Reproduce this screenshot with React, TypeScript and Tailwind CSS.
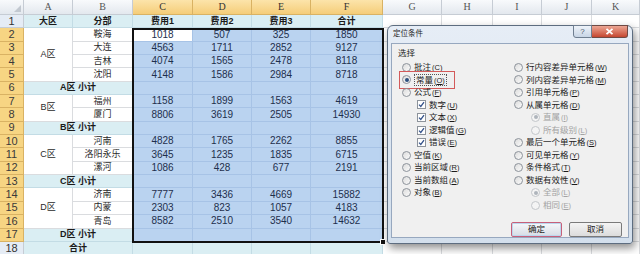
import React from "react";

const base =
  "flex items-center justify-center whitespace-nowrap overflow-hidden border-r border-b leading-none";
const white = "bg-white border-[#dadcdf] text-[#2a2a2a] text-[9px]";
const teal = "bg-[#daeef3] border-[#c3dce5] text-[#1a1a1a] font-bold text-[9px]";
const sel = "bg-[#bad3f0] border-[#a7c3e6] text-[#1e2f4d] text-[10px]";
const selSub = "bg-[#a6c7ec] border-[#95b8e2]";
const active = "bg-white border-[#a7c3e6] text-[#1e2f4d] text-[10px]";
const rowHeadSel = "bg-[#f7d583] border-[#d9b263] text-[#3a3a3a] text-[11px]";
const rowHead = "bg-[#e5ecf5] border-[#c6ccd4] text-[#333] text-[11px]";
const colHead =
  "bg-linear-to-b from-[#f8fafc] to-[#e3e8ee] border-[#c6ccd4] text-[#555] text-[10px] font-['Liberation_Serif',serif]";
const colHeadSel =
  "bg-linear-to-b from-[#fce4aa] to-[#f5cd78] border-[#d9b263] text-[#333] text-[10px] font-['Liberation_Serif',serif]";

const spanRows: Record<number, string> = {
  2: "row-span-2",
  3: "row-span-3",
  4: "row-span-4",
};

const groups: { name: string; rows: [string, number, number, number, number][] }[] = [
  {
    name: "A区",
    rows: [
      ["鞍海", 1018, 507, 325, 1850],
      ["大连", 4563, 1711, 2852, 9127],
      ["吉林", 4074, 1565, 2478, 8118],
      ["沈阳", 4148, 1586, 2984, 8718],
    ],
  },
  {
    name: "B区",
    rows: [
      ["福州", 1158, 1899, 1563, 4619],
      ["厦门", 8806, 3619, 2505, 14930],
    ],
  },
  {
    name: "C区",
    rows: [
      ["河南", 4828, 1765, 2262, 8855],
      ["洛阳永乐", 3645, 1235, 1835, 6715],
      ["漯河", 1086, 428, 677, 2191],
    ],
  },
  {
    name: "D区",
    rows: [
      ["济南", 7777, 3436, 4669, 15882],
      ["内蒙", 2303, 823, 1057, 4183],
      ["青岛", 8582, 2510, 3540, 14632],
    ],
  },
];

function Cell({ cls, children }: { cls: string; children?: React.ReactNode }) {
  return <div className={`${base} ${cls}`}>{children}</div>;
}

function Radio({ checked, disabled }: { checked?: boolean; disabled?: boolean }) {
  return (
    <span
      className={
        disabled
          ? "w-[9px] h-[9px] shrink-0 rounded-full border border-[#c3c6ca] bg-[#f4f4f4] flex items-center justify-center"
          : "w-[9px] h-[9px] shrink-0 rounded-full border border-[#8d939b] bg-linear-to-br from-[#dcdcdc] to-[#fbfbfb] flex items-center justify-center"
      }
    >
      {checked ? (
        <span
          className={
            disabled
              ? "w-[4px] h-[4px] rounded-full bg-[#aeb4bb]"
              : "w-[4px] h-[4px] rounded-full bg-[#2b4f7e]"
          }
        />
      ) : null}
    </span>
  );
}

function Check() {
  return (
    <span className="w-[9px] h-[9px] shrink-0 border border-[#8d939b] bg-white flex items-center justify-center">
      <svg width="7" height="7" viewBox="0 0 7 7">
        <path d="M1 3.6 L2.8 5.4 L6 1.2" fill="none" stroke="#34528a" strokeWidth="1.3" />
      </svg>
    </span>
  );
}

function Label({ text, k, disabled }: { text: string; k: string; disabled?: boolean }) {
  return (
    <span
      className={
        disabled
          ? "text-[8.5px] leading-none text-[#a3a3a3] whitespace-nowrap"
          : "text-[8.5px] leading-none text-[#1b1b1b] whitespace-nowrap"
      }
    >
      {text}
      <span className="text-[7.5px] ml-[1px]">
        (<u>{k}</u>)
      </span>
    </span>
  );
}

type Opt = { t: string; k: string; kind: "r" | "c" | "sr"; checked?: boolean; disabled?: boolean; mark?: boolean } | null;

const leftOpts: Opt[] = [
  { t: "批注", k: "C", kind: "r" },
  { t: "常量", k: "O", kind: "r", checked: true, mark: true },
  { t: "公式", k: "F", kind: "r" },
  { t: "数字", k: "U", kind: "c" },
  { t: "文本", k: "X", kind: "c" },
  { t: "逻辑值", k: "G", kind: "c" },
  { t: "错误", k: "E", kind: "c" },
  { t: "空值", k: "K", kind: "r" },
  { t: "当前区域", k: "R", kind: "r" },
  { t: "当前数组", k: "A", kind: "r" },
  { t: "对象", k: "B", kind: "r" },
  null,
];

const rightOpts: Opt[] = [
  { t: "行内容差异单元格", k: "W", kind: "r" },
  { t: "列内容差异单元格", k: "M", kind: "r" },
  { t: "引用单元格", k: "P", kind: "r" },
  { t: "从属单元格", k: "D", kind: "r" },
  { t: "直属", k: "I", kind: "sr", checked: true, disabled: true },
  { t: "所有级别", k: "L", kind: "sr", disabled: true },
  { t: "最后一个单元格", k: "S", kind: "r" },
  { t: "可见单元格", k: "Y", kind: "r" },
  { t: "条件格式", k: "T", kind: "r" },
  { t: "数据有效性", k: "V", kind: "r" },
  { t: "全部", k: "L", kind: "sr", checked: true, disabled: true },
  { t: "相同", k: "E", kind: "sr", disabled: true },
];

function OptRow({ o }: { o: Opt }) {
  if (!o) return <div className="h-[12.55px]" />;
  if (o.kind === "c") {
    return (
      <div className="h-[12.55px] flex items-center gap-[3px] pl-[15px]">
        <Check />
        <Label text={o.t} k={o.k} />
      </div>
    );
  }
  if (o.kind === "sr") {
    return (
      <div className="h-[12.55px] flex items-center gap-[3px] pl-[17px]">
        <Radio checked={o.checked} disabled />
        <Label text={o.t} k={o.k} disabled />
      </div>
    );
  }
  return (
    <div className="relative h-[12.55px] flex items-center gap-[3px]">
      <Radio checked={o.checked} />
      {o.mark ? (
        <span className="border border-dotted border-[#555] px-[1px] py-[1px] leading-none flex">
          <Label text={o.t} k={o.k} />
        </span>
      ) : (
        <Label text={o.t} k={o.k} />
      )}
      {o.mark ? (
        <span className="absolute left-[-3px] top-[-3px] w-[56px] h-[18px] border border-[#d35a5a]" />
      ) : null}
    </div>
  );
}

function Dialog() {
  return (
    <div className="absolute left-[387px] top-[25px] w-[246px] h-[219px] rounded-t-[6px] rounded-b-[3px] border border-[#5d6d80] bg-linear-to-b from-[#e6edf6] to-[#d3dfec] shadow-[2px_4px_8px_rgba(0,0,0,0.45)] flex flex-col">
      <div className="h-[17px] flex items-start pl-[5px] pr-[4px]">
        <span className="mt-[4px] text-[7.5px] leading-none text-[#1e1e1e]">定位条件</span>
        <div className="ml-auto flex mt-[-1px]">
          <div className="w-[19px] h-[13px] rounded-bl-[3px] border border-[#6f7e90] bg-linear-to-b from-[#eef3f9] to-[#c8d5e5] flex items-center justify-center text-[8px] text-[#4b5a6c] font-['Liberation_Sans',sans-serif]">
            ?
          </div>
          <div className="w-[36px] h-[13px] rounded-br-[3px] border border-l-0 border-[#6f4a44] bg-linear-to-b from-[#eca694] to-[#c4452f] flex items-center justify-center">
            <svg width="9" height="7" viewBox="0 0 9 7">
              <path d="M1.5 0.8 L7.5 6.2 M7.5 0.8 L1.5 6.2" stroke="#ffffff" strokeWidth="1.8" />
            </svg>
          </div>
        </div>
      </div>
      <div className="mx-[3px] mb-[5px] flex-1 border border-[#97a8bf] bg-[#f0f0f0] flex flex-col">
        <div className="pt-[3px] pl-[6px] h-[16px] flex items-center text-[8.5px] leading-none text-[#1b1b1b]">
          选择
        </div>
        <div className="mt-[1px] pl-[10px] grid grid-cols-[112px_1fr]">
          <div className="flex flex-col">
            {leftOpts.map((o, i) => (
              <OptRow key={i} o={o} />
            ))}
          </div>
          <div className="flex flex-col">
            {rightOpts.map((o, i) => (
              <OptRow key={i} o={o} />
            ))}
          </div>
        </div>
        <div className="mt-[10px] flex justify-end gap-[7px] pr-[6px]">
          <div className="w-[51px] h-[15px] rounded-[2px] border border-[#c7607a] bg-linear-to-b from-[#f6f8fb] to-[#d7dde5] flex items-center justify-center text-[8.5px] leading-none text-[#1b1b1b] shadow-[inset_0_0_0_1px_#bcd7ee]">
            确定
          </div>
          <div className="w-[53px] h-[15px] rounded-[2px] border border-[#7a7a7a] bg-linear-to-b from-[#f4f4f4] to-[#dcdcdc] flex items-center justify-center text-[8.5px] leading-none text-[#1b1b1b]">
            取消
          </div>
        </div>
      </div>
    </div>
  );
}

export default function App() {
  const cols = ["A", "B", "C", "D", "E", "F", "G", "H", "I", "J", "K"];
  const cells: React.ReactNode[] = [];
  let key = 0;
  const push = (cls: string, content?: React.ReactNode) => {
    cells.push(
      <Cell key={key++} cls={cls}>
        {content}
      </Cell>
    );
  };
  const blanks = () => {
    for (let i = 0; i < 5; i++) push(white);
  };

  // header row
  cells.push(
    <div
      key={key++}
      className="relative border-r border-b border-[#c6ccd4] bg-linear-to-b from-[#f8fafc] to-[#e3e8ee] flex items-end justify-end p-[2px]"
    >
      <svg width="7" height="7" viewBox="0 0 7 7">
        <path d="M7 0 L7 7 L0 7 Z" fill="#c2c8d0" />
      </svg>
    </div>
  );
  cols.forEach((c, i) => {
    push(i >= 2 && i <= 5 ? colHeadSel : colHead, c);
  });

  // row 1
  push(rowHead, "1");
  ["大区", "分部", "费用1", "费用2", "费用3", "合计"].forEach((t) => push(teal, t));
  blanks();

  let rn = 2;
  let first = true;
  groups.forEach((g) => {
    g.rows.forEach((r, i) => {
      push(rowHeadSel, String(rn++));
      if (i === 0) {
        cells.push(
          <div key={key++} className={`${base} ${white} ${spanRows[g.rows.length]}`}>
            {g.name}
          </div>
        );
      }
      push(white, r[0]);
      for (let j = 1; j <= 4; j++) {
        push(first && j === 1 ? active : sel, String(r[j]));
      }
      first = false;
      blanks();
    });
    push(rowHeadSel, String(rn++));
    cells.push(
      <div key={key++} className={`${base} ${teal} col-span-2`}>
        {g.name} 小计
      </div>
    );
    for (let j = 0; j < 4; j++) push(`${sel} ${selSub}`);
    blanks();
  });

  // row 18
  push(rowHead, "18");
  cells.push(
    <div key={key++} className={`${base} ${teal} col-span-2`}>
      合计
    </div>
  );
  for (let j = 0; j < 4; j++) push(teal);
  blanks();

  return (
    <div className="relative w-[640px] h-[254px] overflow-hidden bg-white font-['Liberation_Sans','Noto_Sans_CJK_SC',sans-serif]">
      <div className="grid grid-cols-[24px_49px_60px_60px_59px_59px_72px_59px_51px_49px_50px_48px] grid-rows-[15px_repeat(18,13.35px)]">
        {cells}
      </div>
      {/* selection outline */}
      <div className="absolute left-[132px] top-[28px] w-[252px] h-[215px] border-2 border-[#111]" />
      <div className="absolute left-[380px] top-[239px] w-[6px] h-[6px] bg-[#111] border border-white" />
      <Dialog />
    </div>
  );
}
